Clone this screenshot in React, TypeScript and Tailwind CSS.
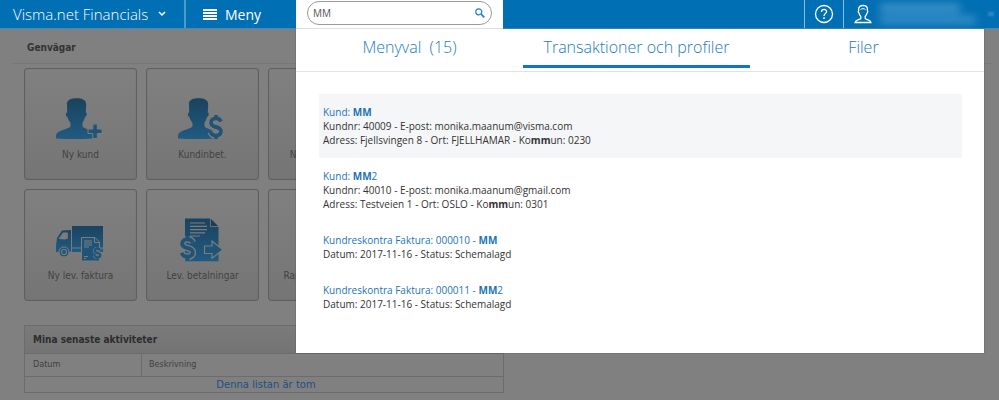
import type { ReactNode } from "react";
import { useState } from "react";

const Dollar = ({ x, y, width, height, stroke }: { x: number; y: number; width: number; height: number; stroke: number }) => {
  const d = "M17 7C16 4.5 14.2 4 12 4C9 4 7 5.5 7 8C7 13.5 17 10.5 17 16C17 18.5 15 20 12 20C9 20 7.5 19 6.5 16.5M12 1V4M12 20V23";
  return (
    <svg x={x} y={y} width={width} height={height} viewBox="4 0 16 24" preserveAspectRatio="none" overflow="visible" fill="none">
      <path d={d} stroke="#7c7c7c" strokeWidth={stroke + 2.5} />
      <path d={d} stroke="#1f5478" strokeWidth={stroke} />
    </svg>
  );
};

const Bust = () => (
  <path
    fill="url(#tile-blue)"
    d="M12 8C11.500 4.500 13.500 3.500 13.500 3.500C15 1.600 18 1.300 22 1.300C27 1.300 31.300 3 31.200 7.500L30.800 15.500C32.500 15.500 32 19.500 30 20C29.500 23 28 24.500 27.500 26V29.500C30 32.500 38 32.500 38 38V41.500C26 42.300 12 42.300 1 41.500V38.500C1.500 33 12 33 15.500 29.500V26C14.500 24.500 13 23 12.500 20C10.500 19.500 10.300 15.500 12.200 15.500Z"
  />
);

const NewCustomerIcon = () => (
  <>
    <Bust />
    <path d="M37.800 27H42.300V32H47V36.500H42.300V41.500H37.800V36.500H33V32H37.800Z" fill="#1f5478" stroke="#7c7c7c" strokeWidth="1" />
  </>
);

const PaymentIcon = () => (
  <>
    <Bust />
    <Dollar x={31} y={17} width={16} height={26} stroke={3.6} />
  </>
);

const TruckIcon = () => (
  <>
    <path d="M17 8H48V29.500H17Z M17 30.500H48V34H17Z M16 12V34H1V28L2 20L7 12.500Z" fill="url(#tile-blue)" />
    <path d="M3.500 21L8 14.500H12.800V20.500L10 21.500Z" fill="#7c7c7c" />
    <circle cx="9" cy="34" r="5" fill="#1f5478" stroke="#7c7c7c" />
    <circle cx="9" cy="34" r="2.500" fill="#1f5478" stroke="#7c7c7c" strokeWidth="1.200" />
    <path d="M26.500 19.500H40L44.500 24V43H26.500Z" fill="#1f5478" stroke="#7c7c7c" />
    <path d="M39.500 19.500V24.500H44.500M29 23H37M29 25H37M29 27H37M29 29H34M29 38.500H33M29 40.500H31" stroke="#7c7c7c" fill="none" />
    <Dollar x={38} y={28.500} width={9} height={13} stroke={4} />
  </>
);

const PayoutIcon = () => (
  <>
    <path d="M8 .5H33L41.500 9V43.300H8Z" fill="url(#tile-blue)" />
    <path d="M33.500 .5V8.500H41.500" fill="#183f59" stroke="#7c7c7c" strokeWidth=".8" />
    <path d="M13 5H28M13 8.300H30M13 11.600H30M13 14.900H28M13 18H23" stroke="#7c7c7c" strokeWidth="1.200" />
    <Dollar x={2} y={17} width={17} height={26} stroke={3.700} />
    <path d="M27.500 28H35V23L45.800 31.800L35 40.300V35.500H27.500Z" fill="#1f5478" stroke="#7c7c7c" strokeWidth="1.200" />
  </>
);

const shortcuts: { label: string; icon?: ReactNode }[] = [
  { label: "Ny kund", icon: <NewCustomerIcon /> },
  { label: "Kundinbet.", icon: <PaymentIcon /> },
  { label: "Ny kundfaktura" },
  { label: "Ny lev. faktura", icon: <TruckIcon /> },
  { label: "Lev. betalningar", icon: <PayoutIcon /> },
  { label: "Rapportera utlägg" },
];

const Shortcut = ({ label, icon }: { label: string; icon?: ReactNode }) => (
  <button
    type="button"
    className="flex h-28 flex-col items-center rounded-[3px] border border-[#5f5f5f] bg-linear-to-b from-[#808080] to-[#757575] pt-7 shadow-[inset_0_0_1px_#666]"
  >
    <svg viewBox="0 0 48 44" className="mr-1 h-11 w-12" aria-hidden="true">
      {icon}
    </svg>
    <span className="mt-1.5 whitespace-nowrap text-[10px] leading-4 text-[#424242]">{label}</span>
  </button>
);

const tabs = ["Menyval\u00a0 (15)", "Transaktioner och profiler", "Filer"];

const results: { title: ReactNode; lines: ReactNode[] }[] = [
  {
    title: <>Kund: <b>MM</b></>,
    lines: [
      "Kundnr: 40009 - E-post: monika.maanum@visma.com",
      <>Adress: Fjellsvingen 8 - Ort: FJELLHAMAR - Ko<b>mm</b>un: 0230</>,
    ],
  },
  {
    title: <>Kund: <b>MM</b>2</>,
    lines: [
      "Kundnr: 40010 - E-post: monika.maanum@gmail.com",
      <>Adress: Testveien 1 - Ort: OSLO - Ko<b>mm</b>un: 0301</>,
    ],
  },
  {
    title: <>Kundreskontra Faktura: 000010 - <b>MM</b></>,
    lines: ["Datum: 2017-11-16 - Status: Schemalagd"],
  },
  {
    title: <>Kundreskontra Faktura: 000011 - <b>MM</b>2</>,
    lines: ["Datum: 2017-11-16 - Status: Schemalagd"],
  },
];

const Header = () => {
  const [query, setQuery] = useState("MM");

  return (
    <header className="flex h-[29px] items-stretch border-b border-[#3c8dc0] bg-[#006fb3] text-white">
      <button type="button" className="flex w-[186px] shrink-0 items-center border-r-2 border-[#4c9aca] pl-[13px] text-[15px] font-light">
        Visma.net Financials
        <svg viewBox="0 0 8 6" className="ml-2.5 h-1.5 w-2" fill="none" stroke="currentColor" strokeWidth="1.500" aria-hidden="true">
          <path d="M1 1L4 4L7 1" />
        </svg>
      </button>
      <button type="button" className="flex w-[110px] shrink-0 items-center gap-2 pl-[17px] text-[14px]">
        <svg viewBox="0 0 14 11" className="h-[11px] w-3.5" fill="currentColor" aria-hidden="true">
          <path d="M0 0H14V2H0ZM0 3H14V5H0ZM0 6H14V8H0ZM0 9H14V11H0Z" />
        </svg>
        Meny
      </button>
      {/* Search field, continues into the result panel */}
      <div className="-mb-px w-[207px] shrink-0 bg-white px-[11px] pt-px">
        <form role="search" className="flex h-6 items-center rounded-full border border-[#9a9a9a] pl-[5px] pr-1.5" onSubmit={(e) => e.preventDefault()}>
          <input
            aria-label="Sök"
            value={query}
            onChange={(e) => setQuery(e.target.value)}
            className="min-w-0 flex-1 bg-transparent text-[10px] text-[#555] outline-none"
          />
          <button type="submit" aria-label="Sök" className="text-[#1b7fd0]">
            <svg viewBox="0 0 10 10" className="size-2.5" fill="none" stroke="currentColor" strokeWidth="1.200" aria-hidden="true">
              <circle cx="3.800" cy="3.800" r="3" />
              <path d="M6 6L9.300 9.300" strokeWidth="1.700" />
            </svg>
          </button>
        </form>
      </div>
      <div className="ml-auto flex">
        <button type="button" aria-label="Hjälp" className="flex w-10 items-center justify-center border-x border-[#8bbfdf]">
          <svg viewBox="0 0 20 20" className="size-5" fill="none" stroke="currentColor" strokeWidth="1.300" aria-hidden="true">
            <circle cx="10" cy="10" r="8.500" />
            <path d="M7.500 8C7.500 4.500 12.600 4.700 12.600 7.600C12.600 9.600 10 9.500 10 12" />
            <path d="M10 13.300V15" strokeWidth="1.600" />
          </svg>
        </button>
        <button type="button" aria-label="Användare" className="flex w-[155px] items-center pl-2.5">
          <svg viewBox="0 0 18 20" className="h-5 w-[18px]" fill="none" stroke="currentColor" strokeWidth="1.300" aria-hidden="true">
            <path d="M6.800 12.500C5.500 11.300 5.200 10 5 9C4 8.500 4.200 7 4.600 6.700C4 2.500 6.500 1.500 9 1.500C12 1.500 14 2.500 13.400 6.700C14 7 14 8.500 13 9C12.800 10 12.500 11.300 11.200 12.500V14.500C12.500 16 16.500 15.500 17 18.500H1C1.500 15.500 5.500 16 6.800 14.500Z" />
            <path d="M6.500 5.500C8 4.300 10 4.500 11.500 5.500" strokeWidth="1" />
          </svg>
          <span className="ml-2 flex flex-col gap-1 blur-[4px]" aria-hidden="true">
            <span className="h-2 w-20 bg-[#4396cb]" />
            <span className="h-2 w-24 bg-[#3a90c7]" />
          </span>
          <span className="ml-3 h-1 w-1.5 bg-[#2f8ac4] blur-[1px]" aria-hidden="true" />
        </button>
      </div>
    </header>
  );
};

const SearchPanel = () => {
  const [active, setActive] = useState(1);

  return (
    <section className="absolute left-[296px] right-[15px] top-[29px] bg-white pb-[31px] shadow-[0_0_1px_#444]">
      <div role="tablist" className="flex h-[43px] border-b border-[#e2e2e2] pr-[7px]">
        {tabs.map((tab, i) => (
          <button
            key={tab}
            type="button"
            role="tab"
            aria-selected={i === active}
            onClick={() => setActive(i)}
            className={`mb-[3px] flex-1 border-b-[3px] text-[16px] font-light leading-5 text-[#1a7bbd] ${i === active ? "border-[#0f75c8]" : "border-transparent"}`}
          >
            {tab}
          </button>
        ))}
      </div>
      <ul className="pl-[23px] pr-[22px] pt-[22px] text-[10px] leading-3.5 text-[#333]">
        {results.map((result, i) => (
          <li key={i} className="px-1 py-[11px] first:bg-[#f5f6f8]">
            <a href="#" className="text-[#1c75b5]">{result.title}</a>
            {result.lines.map((line, n) => (
              <p key={n}>{line}</p>
            ))}
          </li>
        ))}
      </ul>
    </section>
  );
};

const App = () => (
  <div className="relative min-h-screen overflow-hidden bg-[#808080] font-['Open_Sans','Noto_Sans',sans-serif]">
    <svg className="absolute size-0" aria-hidden="true">
      <linearGradient id="tile-blue" x1="0" y1="0" x2="0" y2="1">
        <stop offset="0" stopColor="#1b425d" />
        <stop offset="1" stopColor="#205b82" />
      </linearGradient>
    </svg>
    <Header />
    <main className="font-['DejaVu_Sans_Condensed','DejaVu_Sans',sans-serif]">
      <div className="ml-3 mr-[7px] border-b border-[#777] pb-2 pl-[15px] pt-3">
        <h2 className="text-[10px] font-bold leading-3.5 text-[#333]">Genvägar</h2>
      </div>
      <div className="grid grid-cols-[repeat(3,113px)] gap-x-[9px] gap-y-[9px] pl-6 pt-1">
        {shortcuts.map((s) => (
          <Shortcut key={s.label} {...s} />
        ))}
      </div>
      <table className="ml-6 mt-6 w-[480px] border-collapse text-left text-[9px] text-[#404040]">
        <caption className="h-7 border border-b-0 border-[#6c6c6c] bg-linear-to-b from-[#7a7a7a] to-[#747474] pl-2 text-left text-[10px] font-bold leading-7 text-[#2d2d2d]">
          Mina senaste aktiviteter
        </caption>
        <thead>
          <tr className="h-[23px]">
            <th className="w-[117px] border border-[#6c6c6c] px-2 font-normal">Datum</th>
            <th className="border border-[#6c6c6c] px-[7px] font-normal">Beskrivning</th>
          </tr>
        </thead>
        <tbody>
          <tr>
            <td colSpan={2} className="h-4 border border-[#6c6c6c] pl-1 text-center font-['DejaVu_Sans',sans-serif] text-[10px] leading-3.5 text-[#234f80]">
              Denna listan är tom
            </td>
          </tr>
        </tbody>
      </table>
    </main>
    <SearchPanel />
  </div>
);

export default App;
